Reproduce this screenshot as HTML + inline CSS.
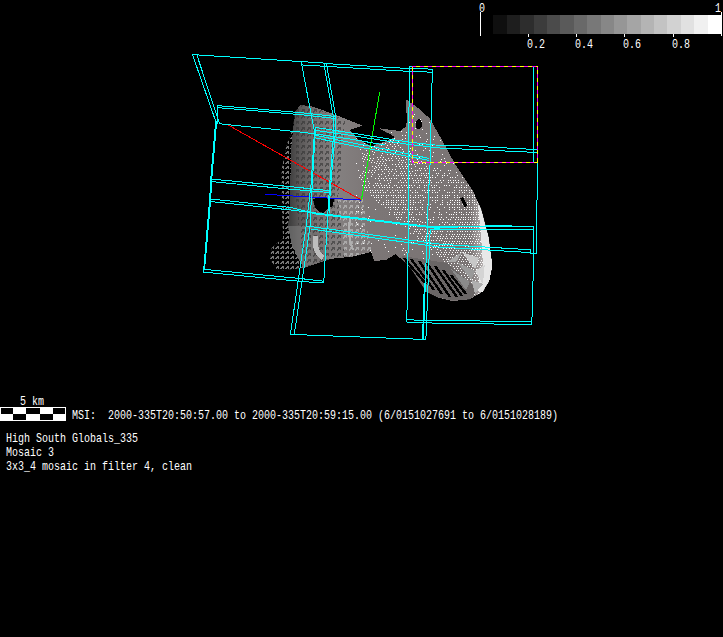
<!DOCTYPE html>
<html><head><meta charset="utf-8"><title>MSI mosaic</title>
<style>
html,body{margin:0;padding:0;background:#000}
body{width:723px;height:637px;overflow:hidden}
svg{display:block}
text{font-family:"Liberation Mono",monospace;font-size:13.6px;fill:#fff;white-space:pre}
</style></head><body>
<svg width="723" height="637" viewBox="0 0 723 637">
<rect width="723" height="637" fill="#000"/>
<!-- asteroid -->

<defs>
<linearGradient id="gbody" gradientUnits="userSpaceOnUse" x1="272" y1="0" x2="492" y2="0">
<stop offset="0" stop-color="#2a2a2a"/>
<stop offset="0.07" stop-color="#383838"/>
<stop offset="0.12" stop-color="#585656"/>
<stop offset="0.2" stop-color="#747070"/>
<stop offset="0.3" stop-color="#848080"/>
<stop offset="0.45" stop-color="#7c7676"/>
<stop offset="0.9" stop-color="#7a7474"/>
<stop offset="0.96" stop-color="#b5b0b0"/>
<stop offset="1" stop-color="#eee"/>
</linearGradient>
<pattern id="pdark" width="6" height="6" patternUnits="userSpaceOnUse" shape-rendering="crispEdges"><path d="M1 4.5L4 1.5M2 1.5h2v2" stroke="#333" stroke-width="1" fill="none"/></pattern>
<pattern id="plight" width="6" height="6" patternUnits="userSpaceOnUse" shape-rendering="crispEdges"><path d="M1 4.5L4 1.5M2 1.5h2v2" stroke="#bbb" stroke-width="1" fill="none"/></pattern>
<pattern id="pblk" width="5" height="5" patternUnits="userSpaceOnUse" shape-rendering="crispEdges"><rect width="5" height="5" fill="#000"/><path d="M0.5 4L3 1.5M1.5 1.5h2v2" stroke="#777" stroke-width="1" fill="none"/></pattern>
<clipPath id="cbody"><polygon points="300.7,105.0 313.0,106.6 331.4,113.3 362.9,125.7 350.0,130.0 357.0,138.8 371.5,146.5 380.0,143.0 390.0,140.0 395.0,137.0 387.0,132.5 379.2,128.3 400.0,131.0 405.5,127.0 407.5,119.4 405.5,105.8 406.3,99.7 415.7,106.0 429.8,118.5 444.0,143.7 455.0,164.0 472.5,190.0 481.0,208.8 488.5,237.0 492.3,265.3 489.5,280.4 482.9,291.7 469.7,299.2 452.7,301.1 437.7,297.3 426.4,291.7 418.8,280.4 412.0,270.0 406.6,263.2 395.5,254.3 386.0,260.0 374.0,261.0 371.2,252.0 353.5,256.5 331.4,258.8 304.8,267.6 278.3,271.3 270.0,259.7 271.6,248.0 283.0,238.0 282.0,210.0 281.6,169.7 286.6,144.8 293.2,128.2 294.9,111.6"/></clipPath>
</defs>
<g shape-rendering="crispEdges">
<polygon points="300.7,105.0 313.0,106.6 331.4,113.3 362.9,125.7 350.0,130.0 357.0,138.8 371.5,146.5 380.0,143.0 390.0,140.0 395.0,137.0 387.0,132.5 379.2,128.3 400.0,131.0 405.5,127.0 407.5,119.4 405.5,105.8 406.3,99.7 415.7,106.0 429.8,118.5 444.0,143.7 455.0,164.0 472.5,190.0 481.0,208.8 488.5,237.0 492.3,265.3 489.5,280.4 482.9,291.7 469.7,299.2 452.7,301.1 437.7,297.3 426.4,291.7 418.8,280.4 412.0,270.0 406.6,263.2 395.5,254.3 386.0,260.0 374.0,261.0 371.2,252.0 353.5,256.5 331.4,258.8 304.8,267.6 278.3,271.3 270.0,259.7 271.6,248.0 283.0,238.0 282.0,210.0 281.6,169.7 286.6,144.8 293.2,128.2 294.9,111.6" fill="url(#gbody)"/>
<g clip-path="url(#cbody)">
<!-- far-left sparse zone -->
<polygon points="268,100 297,100 293,130 291,150 290,200 288,228 292,245 298,258 305,270 305,276 268,276" fill="url(#pblk)"/>
<polygon points="288,226 312,226 314,262 305,269 298,258 292,245" fill="#808080" opacity="0.55"/>
<!-- left dark texture -->
<polygon points="296,100 345,120 338,200 345,262 306,272 300,240 296,200" fill="url(#pdark)" opacity="0.6"/>
<!-- central arrows light -->
<polygon points="338,200 362,196 372,252 345,262" fill="url(#plight)" opacity="0.7"/>
<!-- dotted right zone -->
<path d="M356 138h1M356 163h1M356 195h1M356 211h1M356 222h1M357 140h1M357 224h1M357 243h1M358 170h1M358 207h1M358 211h1M359 177h1M359 202h1M360 149h1M360 175h1M360 228h1M361 179h1M361 212h1M362 147h1M362 153h1M362 158h1M362 173h1M362 177h1M362 185h1M362 209h1M362 226h1M363 145h1M363 156h1M363 161h1M363 165h1M363 171h1M363 181h1M363 243h1M364 143h1M364 154h1M364 159h1M364 175h1M364 179h1M364 187h1M364 240h1M365 157h1M365 167h1M365 172h1M365 176h1M365 181h1M365 185h1M365 190h1M366 145h1M366 150h1M366 155h1M366 170h1M366 187h1M367 148h1M367 153h1M367 159h1M367 178h1M367 190h1M368 157h1M368 172h1M368 181h1M368 185h1M368 207h1M368 218h1M369 146h1M369 155h1M369 160h1M369 170h1M369 183h1M369 187h1M369 216h1M370 149h1M370 158h1M370 190h1M370 192h1M370 221h1M370 250h1M371 147h1M371 162h1M371 172h1M371 176h1M371 195h1M371 243h1M371 252h1M372 151h1M372 160h1M372 166h1M372 170h1M372 174h1M372 190h1M373 154h1M373 158h1M373 185h1M373 192h1M373 195h1M374 146h1M374 152h1M374 162h1M374 168h1M374 172h1M374 187h1M374 197h1M375 144h1M375 166h1M375 170h1M375 178h1M375 183h1M375 190h1M375 192h1M375 209h1M375 221h1M376 148h1M376 163h1M376 167h1M376 185h1M376 195h1M376 197h1M376 200h1M377 157h1M377 161h1M377 183h1M377 190h1M378 149h1M378 159h1M378 165h1M378 169h1M378 174h1M378 178h1M378 185h1M378 192h1M378 195h1M378 197h1M378 202h1M378 240h1M379 144h1M379 163h1M379 167h1M379 176h1M379 180h1M379 187h1M379 200h1M380 157h1M380 161h1M380 183h1M380 190h1M380 192h1M381 145h1M381 155h1M381 165h1M381 169h1M381 174h1M381 178h1M381 185h1M381 195h1M381 197h1M381 204h1M382 143h1M382 149h1M382 153h1M382 159h1M382 163h1M382 171h1M382 187h1M382 190h1M383 157h1M383 161h1M383 178h1M383 192h1M383 195h1M383 202h1M383 204h1M383 221h1M384 151h1M384 165h1M384 169h1M384 173h1M384 180h1M384 185h1M384 187h1M384 244h1M385 143h1M385 149h1M385 152h1M385 159h1M385 163h1M385 167h1M385 176h1M385 192h1M385 207h1M385 247h1M386 132h1M386 147h1M386 160h1M386 165h1M386 169h1M386 178h1M386 185h1M386 195h1M386 197h1M386 200h1M386 202h1M386 204h1M387 145h1M387 150h1M387 154h1M387 180h1M387 187h1M387 190h1M388 148h1M388 152h1M388 158h1M388 167h1M388 171h1M388 175h1M388 183h1M388 195h1M388 200h1M388 202h1M388 204h1M388 207h1M388 251h1M389 142h1M389 160h1M389 169h1M389 173h1M389 178h1M389 185h1M389 187h1M389 212h1M389 214h1M390 140h1M390 144h1M390 154h1M390 180h1M390 182h1M390 192h1M390 207h1M390 209h1M391 132h1M391 158h1M391 171h1M391 178h1M391 195h1M391 200h1M391 202h1M391 204h1M392 142h1M392 146h1M392 156h1M392 160h1M392 164h1M392 169h1M392 187h1M392 190h1M393 140h1M393 150h1M393 154h1M393 175h1M393 192h1M393 195h1M393 197h1M393 200h1M393 202h1M393 204h1M393 207h1M394 138h1M394 144h1M394 148h1M394 173h1M394 178h1M394 185h1M394 212h1M394 214h1M395 142h1M395 146h1M395 152h1M395 156h1M395 164h1M395 169h1M395 190h1M395 195h1M395 204h1M395 207h1M395 209h1M395 235h1M395 247h1M396 140h1M396 150h1M396 154h1M396 158h1M396 166h1M396 171h1M396 175h1M396 178h1M396 185h1M396 197h1M396 200h1M396 202h1M396 214h1M396 217h1M396 224h1M397 143h1M397 151h1M397 187h1M397 190h1M397 209h1M397 212h1M397 219h1M398 141h1M398 145h1M398 156h1M398 160h1M398 164h1M398 175h1M398 182h1M398 192h1M398 195h1M398 197h1M398 200h1M398 204h1M398 207h1M398 217h1M399 158h1M399 162h1M399 166h1M399 187h1M399 212h1M399 214h1M400 143h1M400 147h1M400 168h1M400 173h1M400 180h1M400 190h1M400 192h1M400 195h1M400 204h1M400 219h1M401 131h1M401 160h1M401 164h1M401 171h1M401 175h1M401 182h1M401 185h1M401 197h1M401 200h1M401 202h1M401 214h1M401 217h1M401 244h1M402 135h1M402 139h1M402 149h1M402 153h1M402 157h1M402 162h1M402 166h1M402 173h1M402 178h1M402 187h1M402 190h1M402 209h1M402 212h1M402 250h1M403 143h1M403 151h1M403 160h1M403 168h1M403 175h1M403 182h1M403 195h1M403 197h1M403 200h1M403 202h1M403 204h1M403 207h1M403 224h1M403 248h1M404 171h1M404 178h1M404 185h1M404 212h1M404 221h1M404 254h1M405 135h1M405 138h1M405 153h1M405 157h1M405 162h1M405 166h1M405 173h1M405 180h1M405 190h1M405 192h1M405 197h1M405 204h1M405 207h1M405 209h1M405 226h1M405 237h1M405 250h1M406 132h1M406 159h1M406 164h1M406 168h1M406 175h1M406 182h1M406 185h1M406 200h1M406 217h1M406 224h1M406 252h1M407 144h1M407 166h1M407 178h1M407 187h1M407 209h1M407 221h1M408 134h1M408 157h1M408 162h1M408 168h1M408 180h1M408 182h1M408 192h1M408 195h1M408 200h1M408 202h1M408 204h1M408 207h1M408 217h1M408 226h1M409 122h1M409 151h1M409 155h1M409 159h1M409 164h1M409 171h1M409 175h1M409 178h1M409 185h1M409 187h1M409 212h1M409 214h1M409 221h1M409 228h1M410 148h1M410 153h1M410 161h1M410 173h1M410 190h1M410 195h1M410 197h1M410 200h1M410 202h1M410 204h1M410 207h1M410 209h1M410 219h1M410 226h1M410 233h1M411 157h1M411 164h1M411 168h1M411 175h1M411 185h1M411 214h1M411 217h1M411 224h1M411 242h1M411 265h1M412 122h1M412 142h1M412 155h1M412 171h1M412 178h1M412 187h1M412 192h1M412 207h1M412 209h1M412 212h1M412 221h1M412 249h1M413 116h1M413 157h1M413 161h1M413 180h1M413 182h1M413 197h1M413 200h1M413 202h1M413 204h1M413 217h1M413 219h1M413 226h1M413 233h1M413 242h1M414 114h1M414 164h1M414 175h1M414 185h1M414 231h1M415 122h1M415 128h1M415 150h1M415 166h1M415 170h1M415 173h1M415 180h1M415 190h1M415 192h1M415 195h1M415 197h1M415 202h1M415 207h1M415 209h1M415 219h1M415 226h1M415 229h1M416 136h1M416 175h1M416 182h1M416 214h1M416 224h1M416 231h1M416 273h1M417 154h1M417 159h1M417 163h1M417 170h1M417 178h1M417 187h1M417 192h1M417 209h1M417 221h1M417 229h1M417 236h1M417 240h1M418 161h1M418 180h1M418 182h1M418 195h1M418 197h1M418 202h1M418 219h1M418 226h1M418 233h1M418 238h1M419 135h1M419 144h1M419 157h1M419 163h1M419 168h1M419 175h1M419 185h1M419 187h1M419 212h1M419 214h1M419 224h1M419 231h1M420 109h1M420 119h1M420 123h1M420 137h1M420 170h1M420 178h1M420 180h1M420 195h1M420 200h1M420 202h1M420 207h1M420 221h1M420 229h1M420 233h1M421 121h1M421 161h1M421 168h1M421 173h1M421 175h1M421 182h1M421 214h1M421 226h1M421 238h1M422 129h1M422 144h1M422 163h1M422 190h1M422 195h1M422 204h1M422 207h1M422 209h1M422 222h1M422 229h1M422 236h1M422 251h1M423 146h1M423 150h1M423 173h1M423 180h1M423 182h1M423 197h1M423 200h1M423 226h1M423 240h1M423 253h1M423 258h1M423 286h1M424 168h1M424 175h1M424 185h1M424 187h1M424 190h1M424 212h1M424 231h1M424 238h1M424 242h1M425 143h1M425 148h1M425 159h1M425 163h1M425 170h1M425 177h1M425 192h1M425 197h1M425 222h1M425 229h1M425 236h1M425 240h1M426 133h1M426 141h1M426 166h1M426 173h1M426 175h1M426 182h1M426 185h1M426 214h1M426 217h1M426 226h1M426 233h1M426 245h1M426 249h1M426 262h1M426 277h1M427 139h1M427 168h1M427 177h1M427 190h1M427 192h1M427 204h1M427 212h1M427 222h1M427 229h1M427 236h1M427 243h1M427 264h1M427 273h1M428 173h1M428 180h1M428 182h1M428 200h1M428 219h1M428 226h1M428 233h1M428 240h1M429 122h1M429 150h1M429 168h1M429 190h1M429 209h1M429 231h1M429 254h1M430 139h1M430 177h1M430 180h1M430 197h1M430 204h1M430 207h1M430 219h1M430 222h1M430 229h1M430 236h1M430 243h1M430 247h1M430 264h1M431 182h1M431 185h1M431 233h1M431 240h1M431 245h1M431 249h1M431 271h1M432 145h1M432 156h1M432 175h1M432 177h1M432 187h1M432 190h1M432 192h1M432 197h1M432 200h1M432 222h1M432 231h1M432 254h1M433 139h1M433 147h1M433 152h1M433 170h1M433 217h1M433 219h1M433 226h1M433 229h1M433 236h1M433 240h1M433 247h1M434 136h1M434 168h1M434 185h1M434 187h1M434 190h1M434 212h1M434 231h1M434 233h1M434 245h1M435 170h1M435 177h1M435 192h1M435 197h1M435 200h1M435 202h1M435 229h1M435 236h1M435 243h1M435 247h1M436 147h1M436 173h1M436 182h1M436 185h1M436 226h1M436 233h1M436 240h1M436 245h1M436 252h1M437 168h1M437 175h1M437 192h1M437 195h1M437 197h1M437 200h1M437 207h1M437 231h1M437 238h1M437 249h1M437 254h1M438 173h1M438 182h1M438 217h1M438 226h1M438 229h1M438 236h1M438 247h1M438 252h1M438 277h1M439 187h1M439 190h1M439 209h1M439 212h1M439 214h1M439 224h1M439 240h1M439 245h1M439 256h1M440 140h1M440 161h1M440 170h1M440 180h1M440 204h1M440 219h1M440 229h1M440 231h1M440 236h1M440 238h1M440 250h1M440 254h1M441 159h1M441 182h1M441 214h1M441 217h1M441 226h1M441 234h1M441 240h1M441 247h1M441 252h1M441 256h1M441 296h1M442 154h1M442 175h1M442 177h1M442 195h1M442 197h1M442 200h1M442 202h1M442 204h1M442 222h1M442 231h1M442 238h1M442 245h1M442 298h1M443 145h1M443 180h1M443 219h1M443 236h1M443 243h1M443 248h1M443 254h1M443 259h1M444 158h1M444 165h1M444 173h1M444 175h1M444 185h1M444 190h1M444 207h1M444 224h1M444 241h1M444 245h1M444 252h1M444 256h1M444 261h1M445 161h1M445 195h1M445 197h1M445 222h1M445 238h1M445 243h1M445 250h1M445 254h1M446 163h1M446 185h1M446 212h1M446 217h1M446 226h1M446 234h1M446 236h1M446 241h1M446 248h1M446 252h1M446 259h1M446 290h1M447 175h1M447 192h1M447 195h1M447 197h1M447 202h1M447 204h1M447 222h1M447 231h1M447 238h1M447 245h1M447 257h1M447 261h1M448 170h1M448 180h1M448 182h1M448 219h1M448 229h1M448 243h1M448 254h1M448 259h1M448 263h1M449 173h1M449 185h1M449 192h1M449 195h1M449 204h1M449 207h1M449 209h1M449 214h1M449 224h1M449 226h1M449 234h1M449 241h1M449 248h1M449 252h1M450 170h1M450 177h1M450 180h1M450 200h1M450 202h1M450 219h1M450 229h1M450 231h1M450 238h1M450 245h1M450 250h1M450 257h1M450 261h1M450 265h1M451 182h1M451 214h1M451 217h1M451 227h1M451 236h1M451 243h1M451 248h1M451 254h1M451 259h1M451 263h1M451 268h1M451 272h1M452 177h1M452 192h1M452 200h1M452 204h1M452 207h1M452 224h1M452 231h1M452 234h1M452 238h1M452 241h1M452 245h1M452 252h1M452 257h1M452 291h1M453 163h1M453 180h1M453 182h1M453 214h1M453 217h1M453 229h1M453 236h1M453 243h1M453 250h1M453 254h1M453 261h1M453 266h1M453 297h1M454 187h1M454 190h1M454 192h1M454 195h1M454 197h1M454 202h1M454 204h1M454 207h1M454 209h1M454 212h1M454 224h1M454 227h1M454 234h1M454 241h1M454 248h1M454 259h1M454 263h1M454 268h1M455 177h1M455 180h1M455 200h1M455 219h1M455 222h1M455 238h1M455 245h1M455 252h1M455 257h1M455 261h1M456 172h1M456 182h1M456 185h1M456 187h1M456 212h1M456 214h1M456 217h1M456 227h1M456 229h1M456 236h1M456 243h1M456 250h1M456 255h1M456 259h1M456 266h1M456 270h1M457 175h1M457 195h1M457 197h1M457 200h1M457 202h1M457 204h1M457 207h1M457 222h1M457 231h1M457 234h1M457 241h1M457 248h1M457 252h1M457 263h1M457 268h1M457 272h1M458 180h1M458 182h1M458 217h1M458 219h1M458 236h1M458 238h1M458 245h1M458 250h1M458 257h1M458 261h1M458 266h1M458 270h1M459 187h1M459 190h1M459 192h1M459 197h1M459 200h1M459 202h1M459 204h1M459 207h1M459 209h1M459 212h1M459 224h1M459 227h1M459 234h1M459 241h1M459 243h1M459 248h1M459 255h1M459 259h1M459 274h1M459 298h1M460 219h1M460 222h1M460 231h1M460 238h1M460 245h1M460 252h1M460 257h1M460 264h1M460 268h1M460 272h1M461 182h1M461 185h1M461 187h1M461 190h1M461 209h1M461 212h1M461 214h1M461 217h1M461 227h1M461 229h1M461 236h1M461 243h1M461 250h1M461 255h1M461 261h1M461 266h1M461 270h1M461 275h1M461 283h1M462 177h1M462 192h1M462 197h1M462 200h1M462 202h1M462 204h1M462 222h1M462 224h1M462 231h1M462 234h1M462 241h1M462 248h1M462 259h1M462 264h1M462 294h1M463 182h1M463 214h1M463 217h1M463 219h1M463 229h1M463 238h1M463 245h1M463 252h1M463 257h1M463 261h1M463 268h1M463 272h1M463 277h1M464 187h1M464 190h1M464 192h1M464 195h1M464 197h1M464 200h1M464 202h1M464 204h1M464 207h1M464 209h1M464 224h1M464 227h1M464 234h1M464 236h1M464 243h1M464 250h1M464 255h1M464 266h1M464 270h1M464 275h1M464 279h1M464 283h1M465 217h1M465 219h1M465 222h1M465 231h1M465 238h1M465 241h1M465 246h1M465 248h1M465 252h1M465 259h1M465 264h1M465 268h1M465 273h1M465 277h1M466 185h1M466 187h1M466 190h1M466 209h1M466 212h1M466 214h1M466 227h1M466 229h1M466 236h1M466 243h1M466 250h1M466 257h1M466 261h1M466 296h1M467 195h1M467 197h1M467 202h1M467 204h1M467 207h1M467 222h1M467 224h1M467 231h1M467 234h1M467 241h1M467 248h1M467 255h1M467 259h1M467 266h1M467 271h1M467 275h1M467 279h1M467 284h1M467 288h1M467 292h1M468 185h1M468 214h1M468 217h1M468 219h1M468 229h1M468 238h1M468 246h1M468 252h1M468 257h1M468 264h1M468 268h1M468 273h1M468 277h1M468 281h1M468 286h1M468 290h1M468 294h1M468 298h1M469 190h1M469 192h1M469 195h1M469 197h1M469 200h1M469 202h1M469 204h1M469 207h1M469 209h1M469 212h1M469 224h1M469 227h1M469 234h1M469 236h1M469 243h1M469 250h1M469 255h1M469 262h1M469 266h1M469 271h1M469 296h1M470 217h1M470 219h1M470 222h1M470 231h1M470 238h1M470 241h1M470 248h1M470 252h1M470 259h1M470 264h1M470 275h1M470 279h1M470 284h1M470 288h1M470 292h1M471 190h1M471 192h1M471 207h1M471 209h1M471 212h1M471 214h1M471 227h1M471 229h1M471 236h1M471 243h1M471 246h1M471 250h1M471 257h1M471 262h1M471 268h1M471 273h1M471 277h1M471 282h1M471 286h1M471 290h1M471 294h1M472 195h1M472 197h1M472 200h1M472 202h1M472 222h1M472 224h1M472 234h1M472 241h1M472 248h1M472 255h1M472 266h1M472 271h1M472 275h1M472 279h1M472 292h1M472 296h1M473 212h1M473 214h1M473 217h1M473 219h1M473 229h1M473 231h1M473 238h1M473 246h1M473 253h1M473 260h1M473 264h1M473 269h1M473 284h1M473 288h1M474 195h1M474 197h1M474 200h1M474 202h1M474 204h1M474 207h1M474 209h1M474 224h1M474 227h1M474 234h1M474 236h1M474 243h1M474 250h1M474 257h1M474 262h1M474 273h1M474 277h1M474 282h1M474 286h1M474 290h1M474 294h1M475 217h1M475 219h1M475 222h1M475 231h1M475 241h1M475 248h1M475 255h1M475 260h1M475 266h1M475 271h1M475 275h1M475 280h1M475 284h1M475 288h1M475 292h1M476 204h1M476 207h1M476 209h1M476 212h1M476 214h1M476 227h1M476 229h1M476 236h1M476 239h1M476 246h1M476 253h1M476 257h1M476 264h1M476 269h1M476 273h1M477 202h1M477 222h1M477 224h1M477 234h1M477 241h1M477 243h1M477 248h1M477 250h1M477 255h1M477 262h1M477 266h1M477 277h1M477 282h1M477 286h1M477 290h1M478 212h1M478 214h1M478 217h1M478 219h1M478 229h1M478 231h1M478 239h1M478 246h1M478 253h1M478 260h1M478 264h1M478 271h1M478 275h1M478 280h1M478 284h1M478 288h1M478 293h1M479 207h1M479 209h1M479 224h1M479 227h1M479 234h1M479 236h1M479 243h1M479 250h1M479 257h1M479 269h1M479 273h1M479 278h1M480 217h1M480 219h1M480 222h1M480 231h1M480 241h1M480 248h1M480 255h1M480 262h1M480 266h1M480 271h1M480 282h1M480 286h1M480 291h1M481 212h1M481 214h1M481 227h1M481 229h1M481 236h1M481 239h1M481 246h1M481 253h1M481 260h1M481 264h1M481 275h1M481 280h1M481 284h1M481 288h1M482 219h1M482 222h1M482 224h1M482 234h1M482 241h1M482 243h1M482 250h1M482 257h1M482 262h1M482 269h1M482 273h1M482 278h1M482 282h1M482 286h1M482 291h1M483 229h1M483 231h1M483 239h1M483 246h1M483 248h1M483 253h1M483 255h1M483 260h1M483 267h1M483 271h1M483 275h1M484 224h1M484 227h1M484 236h1M484 243h1M484 250h1M484 257h1M484 264h1M484 269h1M484 280h1M484 284h1M484 289h1M485 231h1M485 234h1M485 241h1M485 248h1M485 255h1M485 262h1M485 267h1M485 273h1M485 278h1M485 282h1M486 229h1M486 236h1M486 239h1M486 246h1M486 253h1M486 260h1M486 264h1M486 271h1M486 276h1M486 280h1M487 234h1M487 243h1M487 250h1M487 257h1M487 262h1M487 269h1M487 273h1M488 239h1M488 241h1M488 248h1M488 255h1M488 260h1M488 267h1M488 271h1M488 278h1M489 246h1M489 253h1M489 257h1M489 264h1M489 276h1M490 250h1M490 255h1M490 262h1M490 269h1M490 273h1M491 267h1" stroke="#fff" stroke-width="1" fill="none" transform="translate(0,0.5)"/>
<!-- bright limb -->
<polygon points="478,205 481,207 489,237 492.5,266 489,282 482,292 476,291 483,265 481,235" fill="#e8e8e8"/>
<!-- crater rim -->
<path d="M316 236 Q313 251 323 258" stroke="#bdbdbd" stroke-width="5" fill="none"/>
<path d="M350 218 Q347 236 353 250" stroke="#b0b0b0" stroke-width="2" fill="none"/>
<!-- bottom right streaks -->
<polygon points="402,256 447,263 478,290 470,300 430,300 405,275" fill="#6a6666"/>
<g stroke="#000" stroke-width="2.4">
<line x1="404" y1="258" x2="426" y2="284"/>
<line x1="411" y1="259" x2="434" y2="290"/>
<line x1="419" y1="261" x2="442" y2="294"/>
<line x1="427" y1="263" x2="450" y2="297"/>
<line x1="435" y1="266" x2="457" y2="297"/>
<line x1="443" y1="270" x2="462" y2="296"/>
<line x1="451" y1="275" x2="466" y2="294"/>
</g>
<polygon points="462,252 479,258 475,269" fill="#c8c8c8"/>
<polygon points="456.5,261.5 475,271 471.5,280" fill="#9a9a9a"/>
<polygon points="475,271 484.7,265 483,284" fill="#d4d4d4"/>
<polygon points="451,269 469.7,282 466,290" fill="#8a8a8a"/>
<polygon points="471.5,280 483,284 475,293.5" fill="#b0b0b0"/>
<polygon points="447,262 462,252 456.5,261.5" fill="#a8a8a8"/>
</g>
<!-- black holes -->
<polygon points="313,199 322,197 334,199 333,206 327,209 324,213 319,212 315,207" fill="#000"/>
<ellipse cx="418.8" cy="124.3" rx="3.3" ry="5" fill="#000"/>
<polygon points="460,198 463,197 467,205 465,208" fill="#000"/>
</g>

<!-- axes -->
<g shape-rendering="crispEdges" stroke-width="1" fill="none">
<line x1="228.5" y1="125.2" x2="361.4" y2="200.1" stroke="#f00"/>
<line x1="379.6" y1="92.3" x2="361.4" y2="200.1" stroke="#0f0"/>
<line x1="265.2" y1="194.3" x2="361.4" y2="200.1" stroke="#00f"/>
</g>
<!-- frames -->
<g shape-rendering="crispEdges" stroke="#0ff" stroke-width="1" fill="none">
<polyline points="192.5,54.6 328.0,63.3"/>
<polyline points="192.5,54.6 215.7,121.3 214.5,135.0 210.7,180.0 209.6,200.0 206.6,235.0 203.5,272.1"/>
<polyline points="197.0,55.3 219.5,123.8 300.0,132.0 314.0,133.7 350.0,139.0 385.0,145.0"/>
<polyline points="217.4,123.8 217.4,105.6 300.0,112.6 335.8,116.5"/>
<polyline points="217.4,107.6 300.0,114.6 335.8,118.5"/>
<polyline points="216.7,121.3 215.5,135.0 211.7,180.0 210.6,200.0 207.6,235.0 204.5,270.0"/>
<polyline points="311.8,213.5 440.0,228.7"/>
<polyline points="210.7,179.0 290.0,186.6 329.4,190.7"/>
<polyline points="210.7,181.5 290.0,189.2 329.4,192.5"/>
<polyline points="209.6,198.9 290.0,207.4 311.8,212.5 440.0,227.7 512.5,225.0"/>
<polyline points="209.6,201.4 290.0,209.9 327.3,214.6"/>
<polyline points="203.5,269.3 301.8,278.7 323.7,281.2"/>
<polyline points="203.5,272.1 301.8,281.5 323.7,283.0"/>
<polyline points="301.3,62.4 314.5,132.0 311.0,185.0 306.3,225.0 290.4,334.4"/>
<polyline points="315.5,127.1 312.2,185.0 310.6,212.0 310.2,225.0 294.3,334.4"/>
<polyline points="324.0,64.1 333.2,116.4 333.5,135.0 329.6,185.0 327.2,225.0 323.7,283.0"/>
<polyline points="326.5,64.1 335.7,116.4 335.2,135.0 330.7,185.0 329.0,213.0"/>
<polyline points="301.6,64.9 409.5,71.4 423.0,71.6 432.1,72.5"/>
<polyline points="326.5,63.6 405.0,68.3 423.0,68.5 432.5,69.5"/>
<polyline points="409.3,66.3 408.0,255.0 406.8,321.8"/>
<polyline points="432.5,69.2 431.7,92.4 430.2,161.2 428.2,200.8 426.3,255.0 423.4,339.3"/>
<polyline points="430.2,228.9 425.9,339.3"/>
<polyline points="409.3,66.3 537.6,66.3 537.5,162.0 537.5,199.0 536.5,201.0 536.5,253.5"/>
<polyline points="533.8,66.7 533.8,162.0"/>
<polyline points="315.3,127.4 350.0,132.8 408.0,142.0 440.0,145.5 463.0,145.7 537.6,149.6"/>
<polyline points="315.3,130.4 350.0,135.3 408.0,144.3 440.0,148.0 466.0,149.2 537.6,152.5"/>
<polyline points="315.3,135.3 350.0,142.4 395.0,151.0 429.3,158.5"/>
<polyline points="315.3,137.8 350.0,145.3 395.0,153.8 429.3,160.5"/>
<polyline points="306.6,226.0 440.0,244.2 530.5,249.8 530.5,253.5 536.5,253.5"/>
<polyline points="310.7,229.0 440.0,247.1 530.5,252.6"/>
<polyline points="426.3,226.3 533.8,226.3 533.8,253.0 531.8,323.8"/>
<polyline points="430.0,229.0 532.8,229.0"/>
<polyline points="290.4,334.4 420.6,339.3 425.9,339.3"/>
<polyline points="424.4,283.0 422.5,339.3"/>
<polyline points="406.8,319.9 531.8,321.8"/>
<polyline points="406.8,322.6 531.8,324.6"/>
</g>
<g shape-rendering="crispEdges" fill="none" stroke-width="1">
<polyline points="412.5,162.5 412.5,66.5 537.5,66.5 537.5,162.5 412.5,162.5" stroke="#f0f"/>
<g stroke="#ff0" stroke-dasharray="4 4">
<line x1="412" y1="66.5" x2="538" y2="66.5" stroke-dashoffset="4"/>
<line x1="537.5" y1="66" x2="537.5" y2="163" stroke-dashoffset="4"/>
<line x1="412.5" y1="67" x2="412.5" y2="163" stroke-dashoffset="0"/>
<line x1="412" y1="162.5" x2="538" y2="162.5" stroke-dashoffset="6"/>
</g>
</g>
<!-- colorbar -->
<g shape-rendering="crispEdges">
<rect x="493.4" y="15" width="13.9" height="19" fill="rgb(15,15,15)"/>
<rect x="506.8" y="15" width="13.9" height="19" fill="rgb(30,30,30)"/>
<rect x="520.2" y="15" width="13.9" height="19" fill="rgb(45,45,45)"/>
<rect x="533.6" y="15" width="13.9" height="19" fill="rgb(60,60,60)"/>
<rect x="546.9" y="15" width="13.9" height="19" fill="rgb(75,75,75)"/>
<rect x="560.3" y="15" width="13.9" height="19" fill="rgb(90,90,90)"/>
<rect x="573.7" y="15" width="13.9" height="19" fill="rgb(105,105,105)"/>
<rect x="587.1" y="15" width="13.9" height="19" fill="rgb(120,120,120)"/>
<rect x="600.5" y="15" width="13.9" height="19" fill="rgb(135,135,135)"/>
<rect x="613.9" y="15" width="13.9" height="19" fill="rgb(150,150,150)"/>
<rect x="627.3" y="15" width="13.9" height="19" fill="rgb(165,165,165)"/>
<rect x="640.7" y="15" width="13.9" height="19" fill="rgb(180,180,180)"/>
<rect x="654.1" y="15" width="13.9" height="19" fill="rgb(195,195,195)"/>
<rect x="667.4" y="15" width="13.9" height="19" fill="rgb(210,210,210)"/>
<rect x="680.8" y="15" width="13.9" height="19" fill="rgb(225,225,225)"/>
<rect x="694.2" y="15" width="13.9" height="19" fill="rgb(240,240,240)"/>
<rect x="707.6" y="15" width="13.9" height="19" fill="rgb(255,255,255)"/>
<rect x="480" y="12" width="1" height="24" fill="#fff"/>
<rect x="721" y="12" width="1" height="24" fill="#fff"/>
<rect x="528" y="34" width="1" height="3" fill="#fff"/>
<rect x="576" y="34" width="1" height="3" fill="#fff"/>
<rect x="624" y="34" width="1" height="3" fill="#fff"/>
<rect x="673" y="34" width="1" height="3" fill="#fff"/>
</g>
<!-- scalebar -->
<g shape-rendering="crispEdges">
<rect x="0" y="407" width="66" height="14" fill="#fff"/>
<rect x="1.0" y="408" width="12.2" height="6" fill="#000"/>
<rect x="13.2" y="414" width="13.2" height="6" fill="#000"/>
<rect x="26.4" y="408" width="13.2" height="6" fill="#000"/>
<rect x="39.6" y="414" width="13.2" height="6" fill="#000"/>
<rect x="52.8" y="408" width="12.2" height="6" fill="#000"/>
</g>
<g>
<text x="479" y="12" textLength="6" lengthAdjust="spacingAndGlyphs">0</text>
<text x="715" y="12" textLength="6" lengthAdjust="spacingAndGlyphs">1</text>
<text x="527" y="48" textLength="18" lengthAdjust="spacingAndGlyphs">0.2</text>
<text x="575" y="48" textLength="18" lengthAdjust="spacingAndGlyphs">0.4</text>
<text x="623" y="48" textLength="18" lengthAdjust="spacingAndGlyphs">0.6</text>
<text x="672" y="48" textLength="18" lengthAdjust="spacingAndGlyphs">0.8</text>
<text x="20" y="405" textLength="24" lengthAdjust="spacingAndGlyphs">5&#160;km</text>
<text x="72" y="419" textLength="486" lengthAdjust="spacingAndGlyphs">MSI:&#160;&#160;2000-335T20:50:57.00&#160;to&#160;2000-335T20:59:15.00&#160;(6/0151027691&#160;to&#160;6/0151028189)</text>
<text x="6" y="442" textLength="132" lengthAdjust="spacingAndGlyphs">High&#160;South&#160;Globals_335</text>
<text x="6" y="456" textLength="48" lengthAdjust="spacingAndGlyphs">Mosaic&#160;3</text>
<text x="6" y="470" textLength="186" lengthAdjust="spacingAndGlyphs">3x3_4&#160;mosaic&#160;in&#160;filter&#160;4,&#160;clean</text>
</g>
</svg>
</body></html>
